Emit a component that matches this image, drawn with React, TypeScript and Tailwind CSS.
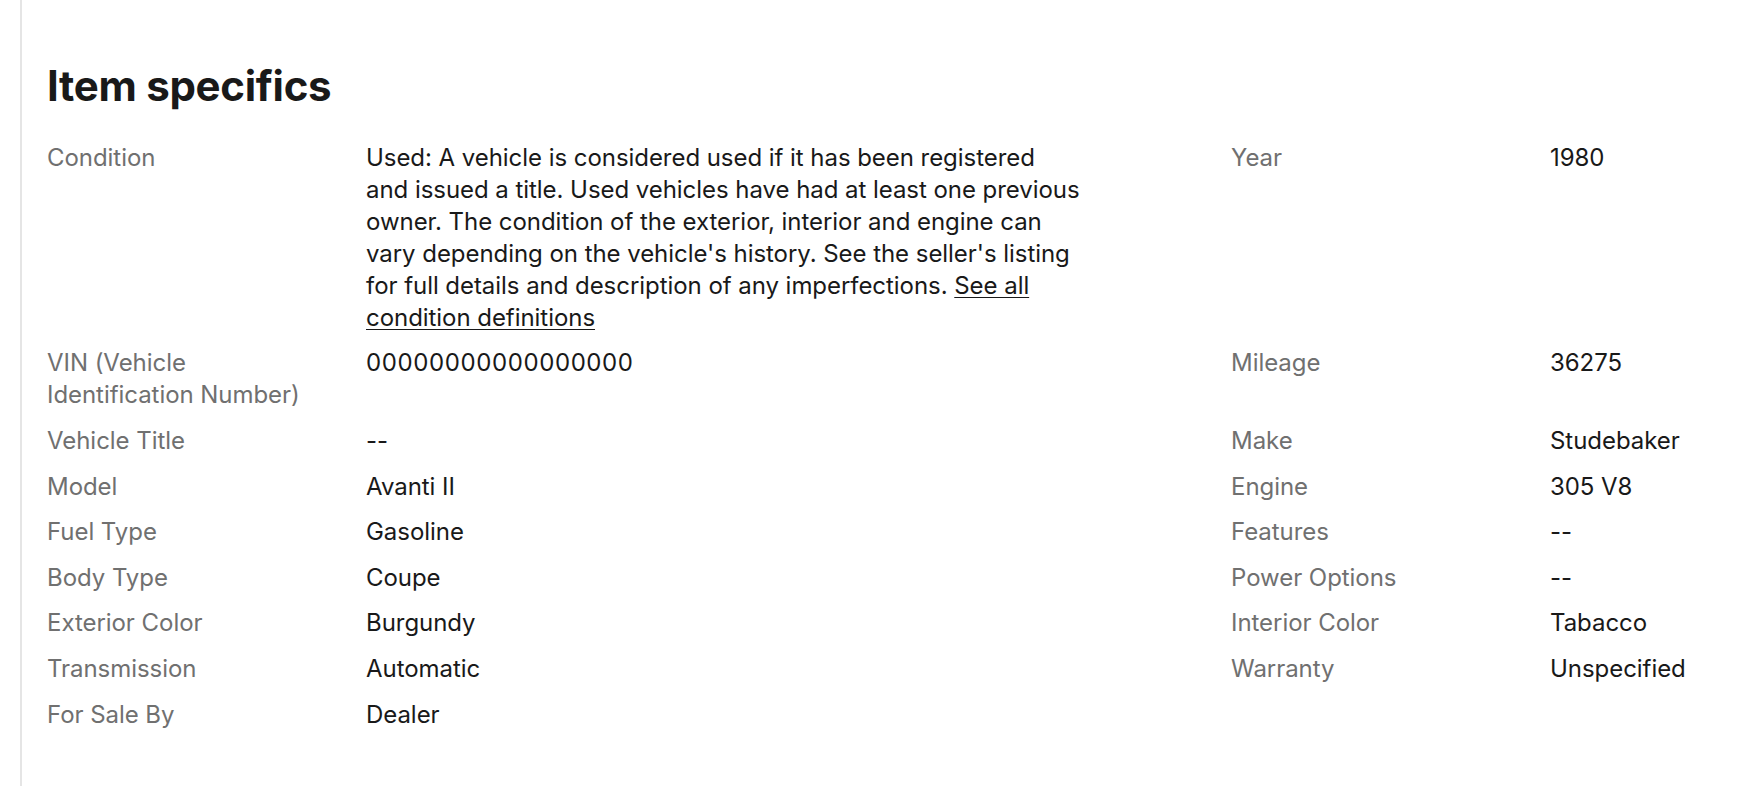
import React from "react";

type Spec = { label: string; value: React.ReactNode };

const rows: [Spec, Spec | null][] = [
  [
    {
      label: "Condition",
      value: (
        <>
          Used: A vehicle is considered used if it has been registered and issued a title. Used vehicles
          have had at least one previous owner. The condition of the exterior, interior and engine can vary
          depending on the vehicle's history. See the seller's listing for full details and description of
          any imperfections.{" "}
          <a href="#" className="underline underline-offset-[3px] decoration-1">
            See all condition definitions
          </a>
        </>
      ),
    },
    { label: "Year", value: "1980" },
  ],
  [
    {
      label: "VIN (Vehicle Identification Number)",
      value: <span className="tracking-[0.6px]">00000000000000000</span>,
    },
    { label: "Mileage", value: "36275" },
  ],
  [
    { label: "Vehicle Title", value: "--" },
    { label: "Make", value: "Studebaker" },
  ],
  [
    { label: "Model", value: "Avanti II" },
    { label: "Engine", value: "305 V8" },
  ],
  [
    { label: "Fuel Type", value: "Gasoline" },
    { label: "Features", value: "--" },
  ],
  [
    { label: "Body Type", value: "Coupe" },
    { label: "Power Options", value: "--" },
  ],
  [
    { label: "Exterior Color", value: "Burgundy" },
    { label: "Interior Color", value: "Tabacco" },
  ],
  [
    { label: "Transmission", value: "Automatic" },
    { label: "Warranty", value: "Unspecified" },
  ],
  [{ label: "For Sale By", value: "Dealer" }, null],
];

function Pair({ spec, wide }: { spec: Spec | null; wide?: boolean }) {
  if (!spec) return <><div /><div /></>;
  return (
    <>
      <div className="py-[6.8px] pr-[44px] text-[#707070]">{spec.label}</div>
      <div className="py-[6.8px] text-[#191919]">
        <div className={wide ? "max-w-[715px]" : ""}>{spec.value}</div>
      </div>
    </>
  );
}

export default function App() {
  return (
    <div
      className="h-[786px] bg-white overflow-hidden"
      style={{ fontFamily: "Inter, 'Liberation Sans', sans-serif" }}
    >
      <div className="ml-[20px] h-full border-l-2 border-[#e5e5e5] pl-[25px] pt-[62px]">
        <h2 className="text-[42px] leading-[48px] font-bold text-[#191919] tracking-[-0.3px]">
          Item specifics
        </h2>
        <div className="mt-[25px] grid grid-cols-[319px_865px_319px_1fr] text-[24px] leading-[32px] tracking-[-0.05px]">
          {rows.map(([l, r], i) => (
            <React.Fragment key={i}>
              <Pair spec={l} wide />
              <Pair spec={r} />
            </React.Fragment>
          ))}
        </div>
      </div>
    </div>
  );
}
